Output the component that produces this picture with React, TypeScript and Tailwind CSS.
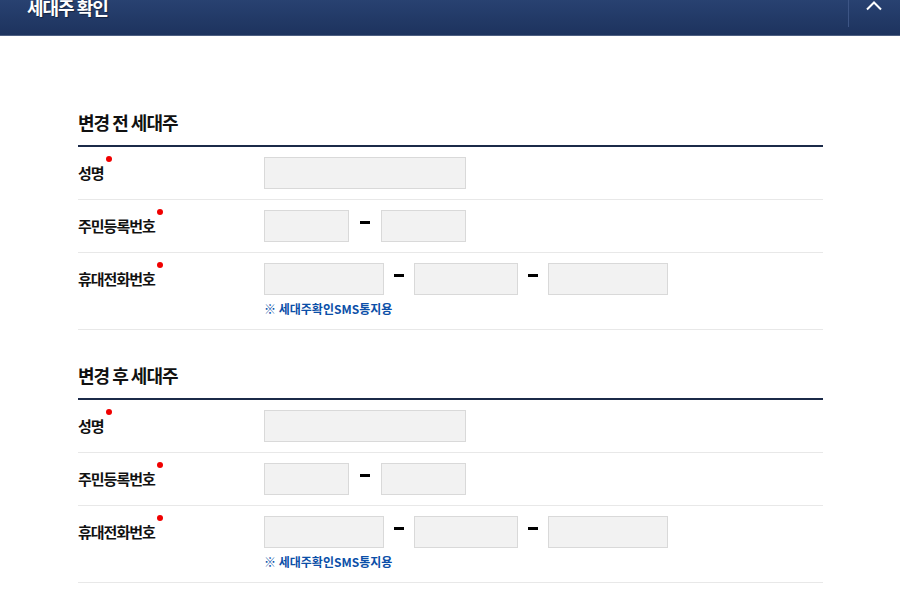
import React from 'react';

function Dot() {
    return <span className="absolute right-[-8px] top-[-7px] h-[6px] w-[6px] rounded-full bg-[#f00000]" />;
}

function Field({ w }: { w: string }) {
    return <input className={`h-8 ${w} border border-[#d9d9d9] bg-[#f2f2f2] outline-none`} />;
}

// 입력칸 사이 구분 하이픈
function Dash({ w }: { w: string }) {
    return (
        <span className={`flex ${w} justify-center pt-[11px]`}>
            <span className="h-[3px] w-[10px] bg-black" />
        </span>
    );
}

function Row({ label, children, note }: { label: string; children: React.ReactNode; note?: boolean }) {
    return (
        <div className={`flex border-b border-[#e8e8e8] pt-[10px] ${note ? 'pb-3' : 'pb-[10px]'}`}>
            <div className="flex h-8 w-[186px] shrink-0 items-center">
                <span className="relative text-[15px] font-bold leading-5 tracking-[-1px] text-[#111]">
                    {label}
                    <Dot />
                </span>
            </div>
            <div>
                <div className="flex">{children}</div>
                {note && (
                    <div className="mt-[6px] text-[12px] font-bold leading-4 text-[#0b4fa8]">※ 세대주확인SMS통지용</div>
                )}
            </div>
        </div>
    );
}

function Section({ title }: { title: string }) {
    return (
        <section className="pt-[33px]">
            <h2 className="mb-[11px] text-[18px] font-bold leading-6 tracking-[-1px] text-[#111]">{title}</h2>
            <div className="border-t-2 border-[#1b2a48]">
                <Row label="성명">
                    <Field w="w-[202px]" />
                </Row>
                <Row label="주민등록번호">
                    <Field w="w-[85px]" />
                    <Dash w="w-8" />
                    <Field w="w-[85px]" />
                </Row>
                <Row label="휴대전화번호" note>
                    <Field w="w-[120px]" />
                    <Dash w="w-[30px]" />
                    <Field w="w-[104px]" />
                    <Dash w="w-[30px]" />
                    <Field w="w-[120px]" />
                </Row>
            </div>
        </section>
    );
}

export default function App() {
    return (
        <div className="h-[616px] overflow-hidden bg-white font-['Noto_Sans_CJK_KR','Noto_Sans',sans-serif]">
            <header className="-mt-5 flex h-[56px] items-center justify-between border-b border-[#4d5f82] bg-gradient-to-b from-[#2f4a7c] to-[#1d335e]">
                <h1 className="pl-[27px] text-[18px] font-bold tracking-[-1px] text-white [text-shadow:1px_1px_1px_rgba(0,0,0,0.4)]">세대주 확인</h1>
                <button className="relative flex h-full w-[52px] items-center justify-center">
                    <span className="absolute left-0 top-0 h-[47px] w-px bg-[#3d5585]" />
                    <svg width="16" height="10" viewBox="0 0 16 10" fill="none" className="-mt-1">
                        <polyline points="1,8.5 8,1.5 15,8.5" stroke="white" strokeWidth="2" />
                    </svg>
                </button>
            </header>
            <main className="ml-[78px] w-[745px] pt-[41px]">
                <Section title="변경 전 세대주" />
                <Section title="변경 후 세대주" />
            </main>
        </div>
    );
}
